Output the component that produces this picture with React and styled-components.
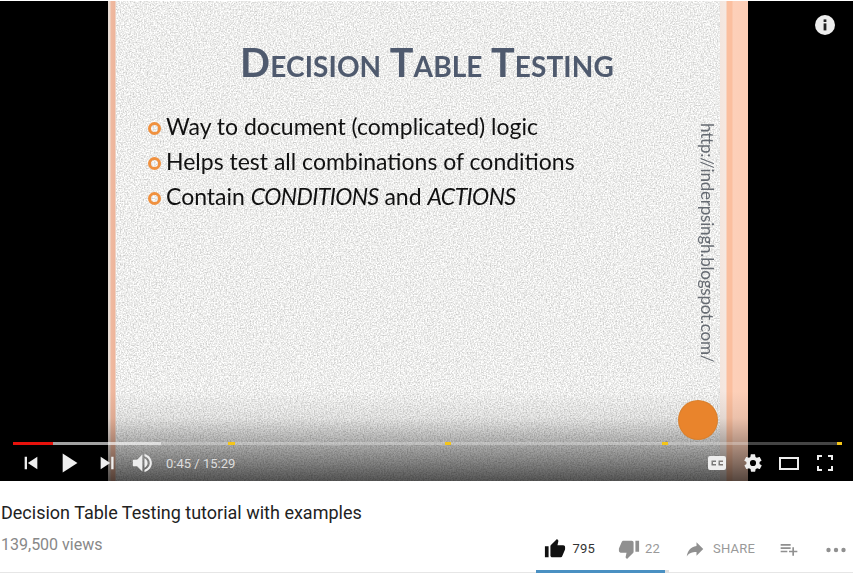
import React from 'react'
import styled, { createGlobalStyle } from 'styled-components'

const GlobalStyle = createGlobalStyle`
    html, body {
        margin: 0;
        padding: 0;
        background: #fff;
        font-family: Roboto, "Liberation Sans", sans-serif;
        overflow: hidden;
    }
`

const Page = styled.div`
    width: 853px;
    height: 581px;
    padding-top: 1px;
    box-sizing: border-box;
    overflow: hidden;
`

const Player = styled.section`
    position: relative;
    height: 480px;
    background: #000;
    display: flex;
    justify-content: flex-start;
    padding-left: 108px;
`

const Slide = styled.div`
    position: relative;
    width: 640px;
    height: 100%;
    box-sizing: border-box;
    padding: 40px 0 0 40px;
    overflow: hidden;
    background: linear-gradient(
        to right,
        #e6dcd6 0,
        #ecdcd2 2px,
        #efb9a0 3px,
        #eeb59b 7px,
        #eeeeec 8px,
        #ececea 612px,
        #f3e6df 612px,
        #f5e8e1 618px,
        #fbbf9f 619px,
        #fbbf9f 624px,
        #fdd0b9 625px,
        #fdcdb5 640px
    );
`

const Noise = styled.svg`
    position: absolute;
    top: 0;
    left: 8px;
    width: 604px;
    height: 100%;
`

const SlideTitle = styled.h1`
    position: relative;
    margin: 0;
    width: 558px;
    text-align: center;
    font-family: Lato, "Open Sans", sans-serif;
    font-size: 39.5px;
    line-height: 42px;
    letter-spacing: 0.1px;
    font-weight: 700;
    font-variant: small-caps;
    color: #4f5a6e;
    filter: blur(0.3px);
`

const Bullets = styled.ul`
    position: relative;
    list-style: none;
    margin: 28px 0 0;
    padding: 0;
    display: flex;
    flex-direction: column;
`

const Bullet = styled.li`
    display: flex;
    align-items: center;
    gap: 5px;
    height: 35px;
    font-family: Lato, "Open Sans", sans-serif;
    font-size: 23px;
    color: #111;
    white-space: pre;
`

const BulletText = styled.span`
    margin-top: -5px;
    filter: blur(0.25px);

    em {
        letter-spacing: -0.6px;
    }
`

const Ring = styled.span`
    width: 7px;
    height: 7px;
    border: 3px solid #f0913f;
    border-radius: 50%;
    flex: none;
`

const SlideUrl = styled.div`
    position: absolute;
    left: 588px;
    top: 122px;
    writing-mode: vertical-rl;
    font-family: Lato, "Open Sans", sans-serif;
    font-size: 17px;
    letter-spacing: -0.2px;
    line-height: 22px;
    color: #666b72;
    filter: blur(0.3px);
`

const OrangeDot = styled.div`
    position: absolute;
    left: 571px;
    top: 400px;
    width: 38px;
    height: 38px;
    border-radius: 50%;
    background: #e9842c;
    box-shadow: 0 0 0 1px #d8802f;
`

const Shade = styled.div`
    position: absolute;
    left: 0;
    right: 0;
    bottom: 0;
    height: 90px;
    background: linear-gradient(
        to bottom,
        rgba(0, 0, 0, 0),
        rgba(0, 0, 0, 0.07) 30%,
        rgba(0, 0, 0, 0.27) 55%,
        rgba(0, 0, 0, 0.48) 80%,
        rgba(0, 0, 0, 0.66)
    );
`

const InfoButton = styled.svg`
    position: absolute;
    top: 14px;
    right: 18px;
    width: 20px;
    height: 20px;
`

const Chrome = styled.div`
    position: absolute;
    left: 0;
    right: 0;
    bottom: 0;
    padding: 0 10px 0 12px;
`

const Progress = styled.div`
    position: relative;
    margin: 0 1px 0 1px;
    height: 3px;
    background: rgba(255, 255, 255, 0.27);
`

const Segment = styled.div`
    position: absolute;
    top: 0;
    bottom: 0;
    left: ${p => p.$left}px;
    width: ${p => p.$width}px;
    background: ${p => p.$color};
`

const ControlRow = styled.div`
    display: flex;
    align-items: center;
    height: 36px;
`

const ControlIcon = styled.svg`
    width: ${p => p.$size || 38}px;
    height: ${p => p.$size || 38}px;
    flex: none;
    fill: #eee;
`

const TimeText = styled.span`
    margin-left: 2px;
    font-size: 13px;
    color: #ddd;
`

const Spacer = styled.div`
    flex: 1;
`

const Details = styled.div`
    position: relative;
    height: 92px;
    border-bottom: 1px solid #e6e6e6;
    box-sizing: border-box;
    margin-top: 0;
    padding: 21px 0 0 1px;
`

const VideoTitle = styled.h2`
    margin: 0;
    font-size: 18px;
    line-height: 22px;
    font-weight: 400;
    color: #222;
`

const MetaRow = styled.div`
    display: flex;
    align-items: center;
    height: 40px;
    margin-top: 2px;
`

const Views = styled.span`
    font-size: 16px;
    color: #888;
    margin-top: -4px;
`

const Actions = styled.div`
    display: flex;
    align-items: center;
    margin-left: auto;
    margin-top: 5px;
    padding-right: 7px;
`

const Action = styled.div`
    display: flex;
    align-items: center;
    gap: ${p => p.$gap ?? 8}px;
    margin-left: ${p => p.$left ?? 0}px;
    font-size: 13px;
    color: ${p => (p.$active ? '#333' : '#999')};
    letter-spacing: 0.2px;
`

const ActionIcon = styled.svg`
    width: ${p => p.$size || 22}px;
    height: ${p => p.$size || 22}px;
    margin-left: ${p => p.$left ?? 0}px;
    fill: ${p => p.$color || '#909090'};
    flex: none;
`

const Sentiment = styled.div`
    position: absolute;
    left: 536px;
    bottom: -1px;
    width: 133px;
    height: 3px;
    background: #e0e0e0;
`

const SentimentFill = styled.div`
    height: 100%;
    background: #4a90c2;
`

const Bars = [
    { left: 40, width: 108, color: 'rgba(255,255,255,0.5)' },
    { left: 0, width: 40, color: '#e8120c' },
    { left: 215, width: 7, color: '#f5c518' },
    { left: 432, width: 6, color: '#f5c518' },
    { left: 649, width: 6, color: '#f5c518' },
    { left: 824, width: 5, color: '#f5c518' },
]

const App = () => {
    return (
        <Page>
            <GlobalStyle />
            <Player>
                <Slide>
                    <Noise xmlns="http://www.w3.org/2000/svg">
                        <filter id="grain" colorInterpolationFilters="sRGB" x="0" y="0" width="100%" height="100%">
                            <feTurbulence type="fractalNoise" baseFrequency="0.7" numOctaves="2" seed="4" />
                            <feColorMatrix
                                type="matrix"
                                values="0.42 0 0 0 0.72  0.42 0 0 0 0.72  0.42 0 0 0 0.715  0 0 0 0 1"
                            />
                            <feGaussianBlur stdDeviation="0.45" />
                        </filter>
                        <rect width="100%" height="100%" filter="url(#grain)" />
                    </Noise>
                    <SlideTitle>Decision Table Testing</SlideTitle>
                    <Bullets>
                        <Bullet>
                            <Ring />
                            <BulletText>Way to document (complicated) logic</BulletText>
                        </Bullet>
                        <Bullet>
                            <Ring />
                            <BulletText>Helps test all combinations of conditions</BulletText>
                        </Bullet>
                        <Bullet>
                            <Ring />
                            <BulletText>
                                Contain <em>CONDITIONS</em> and <em>ACTIONS</em>
                            </BulletText>
                        </Bullet>
                    </Bullets>
                    <SlideUrl>http://inderpsingh.blogspot.com/</SlideUrl>
                    <Shade />
                    <OrangeDot />
                </Slide>
                <InfoButton viewBox="0 0 20 20">
                    <circle cx="10" cy="10" r="10" fill="#eee" />
                    <rect x="8.6" y="8.4" width="2.8" height="7" fill="#222" />
                    <rect x="8.6" y="4.4" width="2.8" height="2.6" fill="#222" />
                </InfoButton>
                <Chrome>
                    <Progress>
                        {Bars.map(b => (
                            <Segment key={b.left + b.color} $left={b.left} $width={b.width} $color={b.color} />
                        ))}
                    </Progress>
                    <ControlRow>
                        <ControlIcon viewBox="0 0 36 36">
                            <path d="M12 24h2.2V12H12zM15 18l9 6V12z" />
                        </ControlIcon>
                        <ControlIcon viewBox="0 0 36 36">
                            <path d="M12 27V9l14 9z" />
                        </ControlIcon>
                        <ControlIcon viewBox="0 0 36 36">
                            <path d="M12 24l9-6-9-6zM22 12v12h2.2V12z" />
                        </ControlIcon>
                        <ControlIcon viewBox="2.5 0 36 36">
                            <path d="M9 21h4l5 5V10l-5 5H9zM20 13.5v9c1.7-.8 3-2.5 3-4.5s-1.3-3.7-3-4.5zM20 9.5v2.2c2.9.9 5 3.5 5 6.3s-2.1 5.400-5 6.300v2.200c4-.9 7-4.400 7-8.500s-3-7.600-7-8.500z" />
                        </ControlIcon>
                        <TimeText>0:45 / 15:29</TimeText>
                        <Spacer />
                        <ControlIcon $size={36} viewBox="0 0 36 36">
                            <path
                                fillRule="evenodd"
                                d="M11 11h14a2 2 0 0 1 2 2v10a2 2 0 0 1-2 2H11a2 2 0 0 1-2-2V13a2 2 0 0 1 2-2zM12.500 15.500v5h4.500v-1.500h-3v-2h3v-1.500zM19.500 15.500v5h4.500v-1.500h-3v-2h3v-1.500z"
                            />
                        </ControlIcon>
                        <ControlIcon $size={36} viewBox="0 0 36 36">
                            <path
                                transform="translate(7.44 7.44) scale(.88)"
                                d="M19.400 13c0-.3.1-.6.1-1s0-.7-.1-1l2.100-1.600c.2-.2.2-.4.1-.6l-2-3.500c-.1-.2-.4-.3-.6-.2l-2.500 1c-.5-.4-1.100-.7-1.700-1l-.4-2.600c0-.2-.2-.4-.5-.4h-4c-.2 0-.4.2-.5.400l-.4 2.600c-.6.3-1.200.6-1.700 1l-2.500-1c-.2-.1-.5 0-.6.2l-2 3.500c-.1.200-.1.400.1.600L4.600 11c0 .3-.1.6-.1 1s0 .7.1 1l-2.100 1.600c-.2.2-.2.4-.1.6l2 3.500c.1.200.4.300.6.200l2.500-1c.5.400 1.100.7 1.700 1l.4 2.600c0 .2.2.4.5.4h4c.2 0 .5-.2.5-.4l.4-2.600c.6-.3 1.200-.6 1.700-1l2.500 1c.2.100.5 0 .6-.2l2-3.500c.1-.2.1-.4-.1-.6zM12 15.500a3.500 3.500 0 1 1 0-7 3.500 3.500 0 0 1 0 7z"
                            />
                        </ControlIcon>
                        <ControlIcon $size={36} viewBox="0 0 36 36">
                            <path fillRule="evenodd" d="M8 12h20v13H8zM10 14v9h16v-9z" />
                        </ControlIcon>
                        <ControlIcon $size={36} viewBox="0 0 36 36">
                            <path d="M10 10h5v2h-3v3h-2zM21 10h5v5h-2v-3h-3zM24 21h2v5h-5v-2h3zM10 21h2v3h3v2h-5z" />
                        </ControlIcon>
                    </ControlRow>
                </Chrome>
            </Player>
            <Details>
                <VideoTitle>Decision Table Testing tutorial with examples</VideoTitle>
                <MetaRow>
                    <Views>139,500 views</Views>
                    <Actions>
                        <Action $active $gap={6}>
                            <ActionIcon $color="#111" viewBox="0 0 24 24">
                                <path d="M1 21h4V9H1v12zm22-11c0-1.100-.9-2-2-2h-6.310l.95-4.570.03-.32c0-.41-.17-.79-.44-1.060L14.170 1 7.590 7.590C7.220 7.950 7 8.450 7 9v10c0 1.100.9 2 2 2h9c.83 0 1.540-.5 1.840-1.220l3.020-7.050c.09-.23.14-.47.14-.73v-1.910l-.01-.01L23 10z" />
                            </ActionIcon>
                            795
                        </Action>
                        <Action $left={23} $gap={5}>
                            <ActionIcon viewBox="0 0 24 24">
                                <path d="M15 3H6c-.83 0-1.540.5-1.840 1.220l-3.020 7.050c-.09.23-.14.47-.14.73v1.910l.01.01L1 14c0 1.100.9 2 2 2h6.310l-.95 4.570-.03.32c0 .41.17.79.44 1.060L9.830 23l6.590-6.590c.36-.36.58-.86.58-1.410V5c0-1.100-.9-2-2-2zm4 0v12h4V3h-4z" />
                            </ActionIcon>
                            22
                        </Action>
                        <Action $left={26} $gap={9}>
                            <ActionIcon $size={18} viewBox="0 0 24 24">
                                <path d="M14 8V3l9 9-9 9v-5c-6 0-10 1.500-13 6 1-7 5-13 13-14z" />
                            </ActionIcon>
                            SHARE
                        </Action>
                        <ActionIcon $size={20} $left={24} viewBox="0 0 24 24">
                            <path d="M14 10H2v2h12v-2zm0-4H2v2h12V6zm4 8v-4h-2v4h-4v2h4v4h2v-4h4v-2h-4zM2 16h8v-2H2v2z" />
                        </ActionIcon>
                        <ActionIcon $size={20} $left={27} viewBox="0 0 20 20">
                            <circle cx="2.5" cy="11" r="2.2" />
                            <circle cx="10" cy="11" r="2.2" />
                            <circle cx="17.5" cy="11" r="2.2" />
                        </ActionIcon>
                    </Actions>
                </MetaRow>
                <Sentiment>
                    <SentimentFill style={{ width: '97%' }} />
                </Sentiment>
            </Details>
        </Page>
    )
}

export default App
